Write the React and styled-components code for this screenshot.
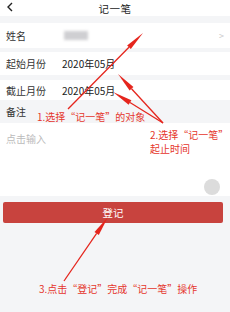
import React from "react";
import styled, { createGlobalStyle } from "styled-components";

const GlobalStyle = createGlobalStyle`
  html, body {
    margin: 0;
    padding: 0;
    background: #f4f5f7;
  }
  body {
    font-family: "Noto Sans CJK SC", "Noto Sans", sans-serif;
  }
`;

const Page = styled.div`
  position: relative;
  width: 230px;
  height: 312px;
  overflow: hidden;
  background: #f4f5f7;
  display: flex;
  flex-direction: column;
`;

const Header = styled.div`
  height: 16px;
  background: #fff;
  display: flex;
  align-items: center;
  justify-content: center;
  position: relative;
  color: #222;
  font-size: 10.5px;
  letter-spacing: 0.5px;
`;

const Back = styled.span`
  position: absolute;
  left: 6px;
  top: 2px;
  display: flex;
`;

const Form = styled.div`
  margin-top: 7px;
  display: flex;
  flex-direction: column;
`;

const Row = styled.div`
  height: ${(p) => p.h}px;
  margin-top: ${(p) => p.gap || 0}px;
  background: #fff;
  display: flex;
  align-items: center;
  padding: 0 6px;
  font-size: 10px;
  color: #333;
`;

const Label = styled.span`
  width: 56px;
`;

const Value = styled.span`
  flex: 1;
  color: #222;
`;

const Blurred = styled.span`
  display: inline-block;
  width: 24px;
  height: 9px;
  background: #cfcfd2;
  filter: blur(1.5px);
  margin-left: 2px;
`;

const Chevron = styled.span`
  color: #c8c8c8;
  font-size: 9px;
`;

const SectionLabel = styled.div`
  height: 23px;
  display: flex;
  align-items: center;
  padding: 0 6px;
  font-size: 10px;
  color: #333;
`;

const NoteArea = styled.div`
  position: relative;
  height: 73px;
  background: #fff;
  padding: 8px 6px;
  box-sizing: border-box;
  font-size: 10px;
  color: #bbb;
`;

const Dot = styled.span`
  position: absolute;
  right: 10px;
  bottom: 1px;
  width: 16px;
  height: 16px;
  border-radius: 50%;
  background: #dcdcdc;
`;

const Submit = styled.button`
  margin: 6px 7px 0 3px;
  height: 21px;
  border: none;
  border-radius: 2px;
  background: #c8433e;
  color: #fff;
  font-family: inherit;
  font-size: 10.5px;
  padding: 0;
`;

const Note = styled.div`
  position: absolute;
  left: ${(p) => p.x}px;
  top: ${(p) => p.y}px;
  color: #e5362c;
  font-size: 10px;
  line-height: 14px;
  white-space: nowrap;
`;

const Arrows = styled.svg`
  position: absolute;
  left: 0;
  top: 0;
  pointer-events: none;
`;

function Arrow({ x1, y1, x2, y2 }) {
  const dx = x2 - x1;
  const dy = y2 - y1;
  const len = Math.hypot(dx, dy);
  const ux = dx / len;
  const uy = dy / len;
  const headLen = 20;
  const headW = 2.6;
  const bx = x2 - ux * headLen;
  const by = y2 - uy * headLen;
  const px = -uy * headW;
  const py = ux * headW;
  return (
    <g fill="#e5251d" stroke="#e5251d">
      <line x1={x1} y1={y1} x2={bx} y2={by} strokeWidth="1.3" />
      <polygon
        points={`${x2},${y2} ${bx + px},${by + py} ${bx - px},${by - py}`}
        stroke="none"
      />
    </g>
  );
}

export default function App() {
  return (
    <>
      <GlobalStyle />
      <Page>
        <Header>
          <Back>
            <svg width="8" height="10" viewBox="0 0 8 10">
              <path d="M6 1 L2 5 L6 9" fill="none" stroke="#222" strokeWidth="1.4" />
            </svg>
          </Back>
          记一笔
        </Header>
        <Form>
          <Row h={25}>
            <Label>姓名</Label>
            <Value>
              <Blurred />
            </Value>
            <Chevron>&gt;</Chevron>
          </Row>
          <Row h={23} gap={4}>
            <Label>起始月份</Label>
            <Value>2020年05月</Value>
          </Row>
          <Row h={20} gap={5}>
            <Label>截止月份</Label>
            <Value>2020年05月</Value>
          </Row>
          <SectionLabel>备注</SectionLabel>
          <NoteArea>
            点击输入
            <Dot />
          </NoteArea>
        </Form>
        <Submit>登记</Submit>

        <Arrows width="230" height="312" viewBox="0 0 230 312">
          <Arrow x1={68} y1={109} x2={143} y2={33} />
          <Arrow x1={163} y1={123} x2={118} y2={74} />
          <Arrow x1={163} y1={123} x2={113} y2={92} />
          <Arrow x1={64} y1={281} x2={108} y2={217} />
        </Arrows>
        <Note x={37} y={110}>1.选择“记一笔”的对象</Note>
        <Note x={150} y={128}>
          2.选择“记一笔”
          <br />
          起止时间
        </Note>
        <Note x={39} y={282}>3.点击“登记”完成“记一笔”操作</Note>
      </Page>
    </>
  );
}
